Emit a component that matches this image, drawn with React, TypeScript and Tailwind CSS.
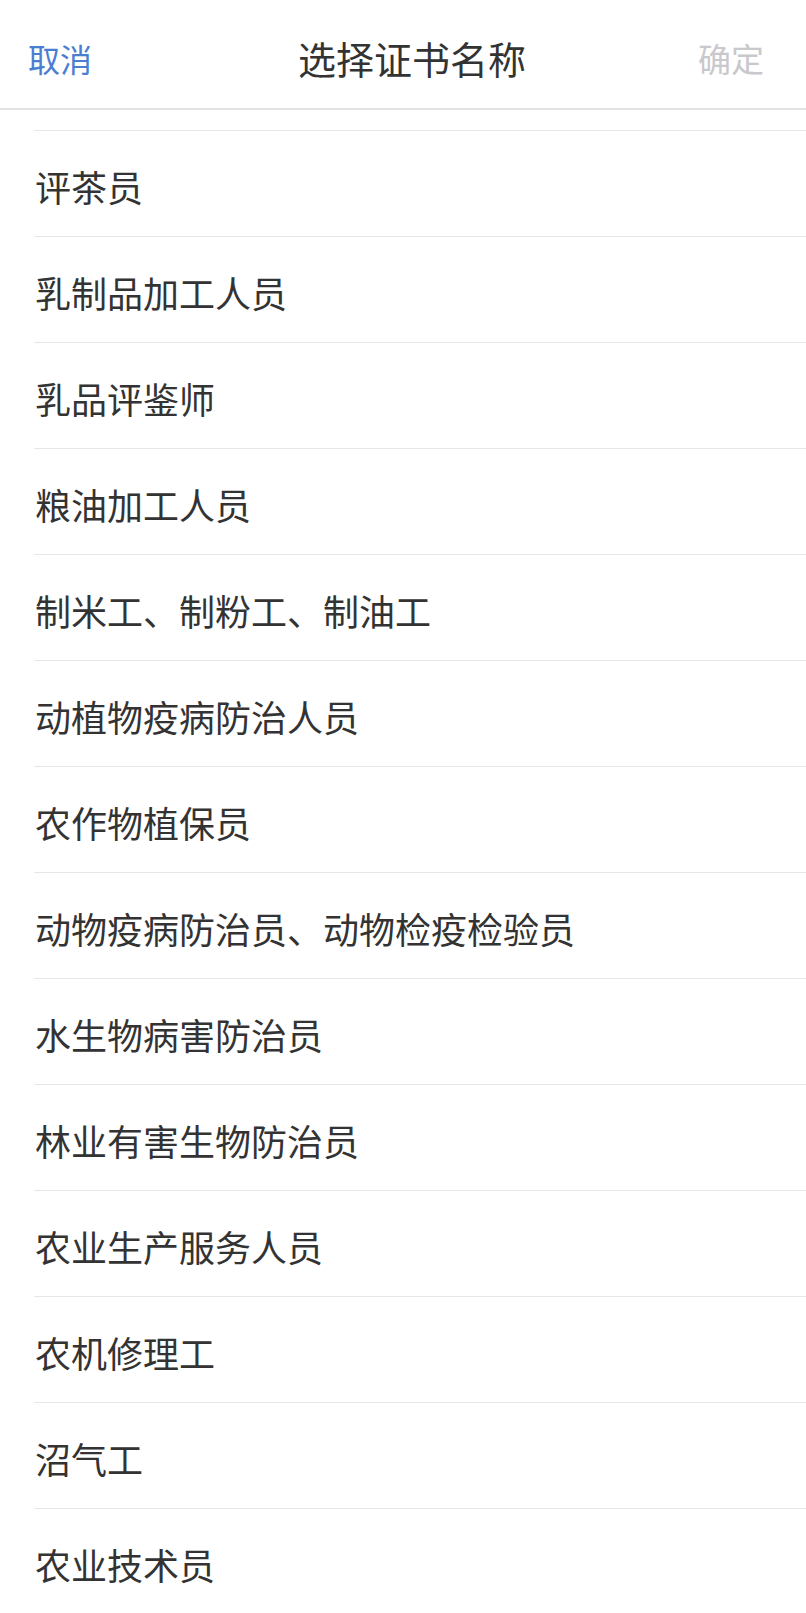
const certificates = [
  "评茶员",
  "乳制品加工人员",
  "乳品评鉴师",
  "粮油加工人员",
  "制米工、制粉工、制油工",
  "动植物疫病防治人员",
  "农作物植保员",
  "动物疫病防治员、动物检疫检验员",
  "水生物病害防治员",
  "林业有害生物防治员",
  "农业生产服务人员",
  "农机修理工",
  "沼气工",
  "农业技术员",
];

const font = "font-['Noto_Sans_CJK_SC','Noto_Sans',sans-serif]";

export default function App() {
  return (
    <div className={`w-full h-[1613px] overflow-hidden bg-white ${font}`}>
      {/* top bar */}
      <header className="h-[110px] pt-[8px] px-[28px] grid grid-cols-[1fr_auto_1fr] items-center border-b-2 border-[#e3e3e3]">
        <button className="justify-self-start text-[32px] leading-none text-[#4a7ed0]">取消</button>
        <h1 className="text-[38px] leading-none text-[#333333] translate-x-[9px]">选择证书名称</h1>
        <button className="justify-self-end text-[33px] leading-none text-[#c8c8cd] mr-[14px]">确定</button>
      </header>

      {/* list (scrolled a bit) */}
      <div className="h-[20px]" />
      <ul>
        {certificates.map((name) => (
          <li
            key={name}
            className="ml-[34px] h-[106px] border-t border-[#e6e6e6] flex items-center pt-[4px] pl-[1px] text-[36px] leading-none text-[#333333]"
          >
            {name}
          </li>
        ))}
      </ul>
    </div>
  );
}
